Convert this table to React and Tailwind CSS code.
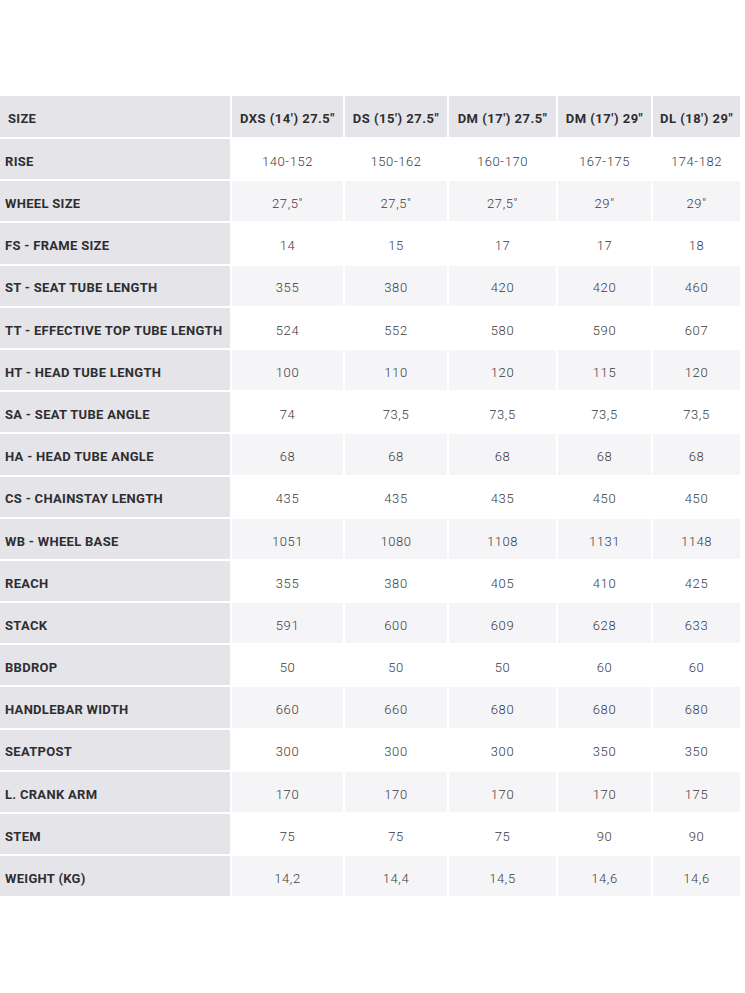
import React from "react";

const sizes = ["DXS (14') 27.5\"", "DS (15') 27.5\"", "DM (17') 27.5\"", "DM (17') 29\"", "DL (18') 29\""];

const rows = [
  ["RISE", "140-152", "150-162", "160-170", "167-175", "174-182"],
  ["WHEEL SIZE", "27,5\"", "27,5\"", "27,5\"", "29\"", "29\""],
  ["FS - FRAME SIZE", "14", "15", "17", "17", "18"],
  ["ST - SEAT TUBE LENGTH", "355", "380", "420", "420", "460"],
  ["TT - EFFECTIVE TOP TUBE LENGTH", "524", "552", "580", "590", "607"],
  ["HT - HEAD TUBE LENGTH", "100", "110", "120", "115", "120"],
  ["SA - SEAT TUBE ANGLE", "74", "73,5", "73,5", "73,5", "73,5"],
  ["HA - HEAD TUBE ANGLE", "68", "68", "68", "68", "68"],
  ["CS - CHAINSTAY LENGTH", "435", "435", "435", "450", "450"],
  ["WB - WHEEL BASE", "1051", "1080", "1108", "1131", "1148"],
  ["REACH", "355", "380", "405", "410", "425"],
  ["STACK", "591", "600", "609", "628", "633"],
  ["BBDROP", "50", "50", "50", "60", "60"],
  ["HANDLEBAR WIDTH", "660", "660", "680", "680", "680"],
  ["SEATPOST", "300", "300", "300", "350", "350"],
  ["L. CRANK ARM", "170", "170", "170", "170", "175"],
  ["STEM", "75", "75", "75", "90", "90"],
  ["WEIGHT (KG)", "14,2", "14,4", "14,5", "14,6", "14,6"],
];

const cols = "grid grid-cols-[230px_111px_102px_107px_93px_87px] gap-x-[2px]";

export default function App() {
  return (
    <div className="w-[745px] h-[993px] bg-white pt-[96px] text-[#2e2e32]" style={{ fontFamily: "Roboto, 'Liberation Sans', sans-serif" }}>
      <div className="flex flex-col gap-y-[2px] w-[740px]">
        <div className={`${cols} h-[41px]`}>
          <div className="bg-[#e5e5e9] flex items-center pl-[8px] pt-[4px] text-[13px] font-bold tracking-[0.3px]">SIZE</div>
          {sizes.map((s, i) => (
            <div key={i} className="bg-[#e5e5e9] flex items-center justify-center pt-[4px] text-[13px] font-bold tracking-[0.5px] whitespace-nowrap">
              {s}
            </div>
          ))}
        </div>
        {rows.map((r, i) => (
          <div key={i} className={`${cols} h-[40.2px]`}>
            <div className="bg-[#e5e5e9] flex items-center pl-[5px] pt-[5px] text-[13px] font-bold tracking-[0.3px] whitespace-nowrap">{r[0]}</div>
            {r.slice(1).map((v, j) => (
              <div
                key={j}
                className={`${i % 2 === 0 ? "bg-white" : "bg-[#f5f5f7]"} flex items-center justify-center pt-[5px] text-[13px] font-light tracking-[0.6px] text-[#3a3a3e]`}
              >
                {v}
              </div>
            ))}
          </div>
        ))}
      </div>
    </div>
  );
}
